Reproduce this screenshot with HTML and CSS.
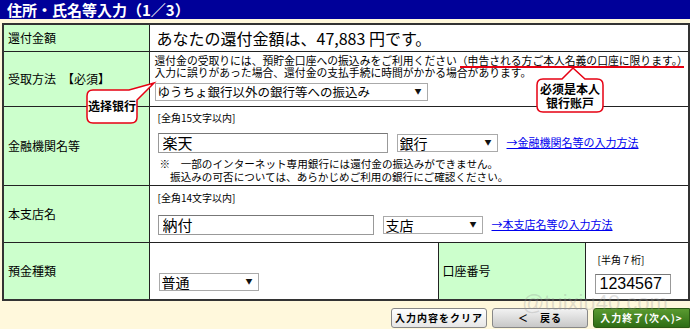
FILE: index.html
```html
<!DOCTYPE html>
<html lang="ja">

<head>
   <meta charset="UTF-8">
   <meta name="viewport" content="width=device-width, initial-scale=1.0">
   <title>住所・氏名等入力</title>

   <link rel="stylesheet" href="styles.css">
</head>

<body>
   <div class="page">
      <div class="header">住所・氏名等入力（1／3）</div>

      <table class="form">
         <colgroup>
            <col class="col__label">
            <col class="col__main">
            <col class="col__label2">
            <col class="col__last">
         </colgroup>

         <tr class="row1">
            <td class="label">還付金額</td>
            <td colspan="3" class="amount">あなたの還付金額は、47,883 円です。</td>
         </tr>

         <tr class="row2">
            <td class="label">受取方法　【必須】</td>
            <td colspan="3" class="cell cell--top">
               <p class="note">還付金の受取りには、預貯金口座への振込みをご利用ください（申告される方ご本人名義の口座に限ります。）<br>入力に誤りがあった場合、還付金の支払手続に時間がかかる場合があります。</p>
               <span class="select select--wide">
                  <select><option>ゆうちょ銀行以外の銀行等への振込み</option></select>
               </span>
            </td>
         </tr>

         <tr class="row3">
            <td class="label">金融機関名等</td>
            <td colspan="3" class="cell cell--top">
               <div class="hint">[全角15文字以内]</div>
               <div class="line">
                  <input class="text text--bank" type="text" value="楽天">
                  <span class="select select--bank">
                     <select><option>銀行</option></select>
                  </span>
                  <a href="#" class="link">→金融機関名等の入力方法</a>
               </div>
               <p class="note note--sub">※　一部のインターネット専用銀行には還付金の振込みができません。<br>　振込みの可否については、あらかじめご利用の銀行にご確認ください。</p>
            </td>
         </tr>

         <tr class="row4">
            <td class="label">本支店名</td>
            <td colspan="3" class="cell cell--top">
               <div class="hint">[全角14文字以内]</div>
               <div class="line line--branch">
                  <input class="text text--branch" type="text" value="納付">
                  <span class="select select--branch">
                     <select><option>支店</option></select>
                  </span>
                  <a href="#" class="link">→本支店名等の入力方法</a>
               </div>
            </td>
         </tr>

         <tr class="row5">
            <td class="label">預金種類</td>
            <td class="cell cell--bottom">
               <span class="select select--type">
                  <select><option>普通</option></select>
               </span>
            </td>
            <td class="label">口座番号</td>
            <td class="cell cell--number">
               <div class="hint">[半角７桁]</div>
               <input class="text text--number" type="text" value="1234567">
            </td>
         </tr>
      </table>

      <div class="buttons">
         <div class="btn btn--clear">入力内容をクリア</div>
         <div class="btn btn--back">＜　戻る</div>
         <div class="btn btn--next">入力終了(次へ)&gt;</div>
      </div>

      <!-- annotations drawn over the screenshot -->
      <svg class="marks" width="690" height="329" viewBox="0 0 690 329">
         <line x1="460" y1="67" x2="684" y2="67" stroke="#e60012" stroke-width="2" />
         <path d="M93,90 H129 L154,83 L137,100 V117 Q137,123 131,123 H93 Q87,123 87,117 V96 Q87,90 93,90 Z"
            fill="#fff" stroke="#e60012" stroke-width="1.5" />
         <path d="M543,79 H562 L573,68 L585,79 H597 Q603,79 603,85 V106 Q603,112 597,112 H543 Q537,112 537,106 V85 Q537,79 543,79 Z"
            fill="#fff" stroke="#e60012" stroke-width="1.5" />
      </svg>
      <div class="callout callout--bank">选择银行</div>
      <div class="callout callout--self">必须是本人<br>银行账户</div>

      <div class="watermark">@tuixiu40.com</div>
   </div>
</body>

</html>
```

FILE: styles.css
```css
* {
   box-sizing: border-box;
   margin: 0;
   padding: 0;
}

body {
   background-color: #fff8dc;
   color: #000;
   font-family: "Noto Sans CJK JP", "Noto Sans", sans-serif;
   font-size: 12px;
   line-height: 1;
}

.page {
   position: relative;
   width: 690px;
   height: 329px;
   overflow: hidden;
}

.header {
   height: 19px;
   background-color: #000099;
   color: #fff;
   font-size: 15px;
   font-weight: 700;
   line-height: 19px;
   padding-left: 7px;
}

.form {
   margin: 4px 0 0 2px;
   width: 686px;
   table-layout: fixed;
   border-collapse: collapse;
   border: 2px solid #333;
   background-color: #fff;
}

.col__label { width: 146px; }
.col__main { width: 289px; }
.col__label2 { width: 147px; }
.col__last { width: 104px; }

.form td {
   border: 1px solid #222;
   vertical-align: middle;
}

.row1 { height: 27px; }
.row2 { height: 55px; }
.row3 { height: 79px; }
.row4 { height: 57px; }
.row5 { height: 58px; }

.label {
   background-color: #ccffcc;
   padding-left: 4px;
   font-size: 12px;
}

.amount {
   padding-left: 7px;
   font-size: 16px;
}

.cell {
   padding-left: 5px;
}

.form .cell--top {
   vertical-align: top;
}

.row2 .cell--top { padding-top: 2px; }
.row3 .cell--top { padding-top: 6px; }
.row4 .cell--top { padding-top: 7px; }

.note {
   font-size: 10.8px;
   line-height: 12px;
   white-space: nowrap;
}

.note--sub {
   font-size: 10.6px;
   margin-top: 4px;
   padding-left: 5px;
   line-height: 13px;
}

.hint {
   font-size: 10px;
   padding-left: 3px;
}

.line {
   display: flex;
   align-items: center;
   gap: 9px;
   margin-top: 10px;
   padding-left: 3px;
}

.line--branch {
   margin-top: 12px;
}

.text {
   height: 20px;
   border: 1px solid #999;
   border-top-color: #777;
   font-family: "Noto Sans CJK JP", sans-serif;
   font-size: 15px;
   padding: 0 4px;
   background: #fff;
   color: #000;
}

.text--bank { width: 230px; }
.text--branch { width: 216px; }
.text--number {
   width: 76px;
   margin-top: 9px;
   font-family: "Liberation Sans", sans-serif;
   font-size: 16px;
}

.select {
   position: relative;
   display: inline-block;
}

.select select {
   appearance: none;
   -webkit-appearance: none;
   width: 100%;
   height: 18px;
   border: 1px solid #aaa;
   background: #fff;
   font-family: "Noto Sans CJK JP", sans-serif;
   font-size: 14px;
   line-height: 16px;
   padding: 0 2px;
   color: #000;
}

.select::after {
   content: "▼";
   position: absolute;
   right: 6px;
   top: 5px;
   font-size: 7px;
   color: #111;
}

.select--wide {
   width: 273px;
   margin-top: 5px;
}

.select--wide select {
   font-size: 12.5px;
}

.select--bank { width: 101px; }
.select--branch { width: 100px; }

.select--type {
   width: 100px;
   margin-left: 4px;
}

.form .cell--bottom {
   vertical-align: bottom;
   padding-bottom: 8px;
}

.form .cell--number {
   vertical-align: top;
   padding: 12px 0 0 9px;
}

.link {
   color: #0000ee;
   font-size: 11px;
   text-decoration: underline;
}

.buttons {
   display: flex;
   justify-content: flex-end;
   gap: 5px;
   margin-top: 7px;
}

.btn {
   width: 96px;
   height: 20px;
   border-radius: 3px;
   border: 1px solid #888;
   font-size: 10px;
   font-weight: 700;
   letter-spacing: 1px;
   line-height: 18px;
   text-align: center;
}

.btn--clear {
   background: linear-gradient(#fff, #e6e6e6);
}

.btn--back {
   background: linear-gradient(#f2f2f2, #c8c8c8);
}

.btn--next {
   width: 97px;
   border-color: #2c5a14;
   background: linear-gradient(#5a9a30, #2f6d14);
   color: #fff;
   border-radius: 3px 0 0 3px;
}

.marks {
   position: absolute;
   top: 0;
   left: 0;
   pointer-events: none;
}

.callout {
   position: absolute;
   font-family: "Noto Sans CJK SC", sans-serif;
   font-size: 12px;
   font-weight: 700;
   line-height: 14px;
   text-align: center;
}

.callout--bank {
   left: 87px;
   top: 99px;
   width: 50px;
}

.callout--self {
   left: 537px;
   top: 82px;
   width: 66px;
}

.watermark {
   position: absolute;
   left: 522px;
   top: 292px;
   font-family: "Liberation Sans", sans-serif;
   font-size: 22px;
   color: rgba(150, 150, 150, 0.3);
}
```
